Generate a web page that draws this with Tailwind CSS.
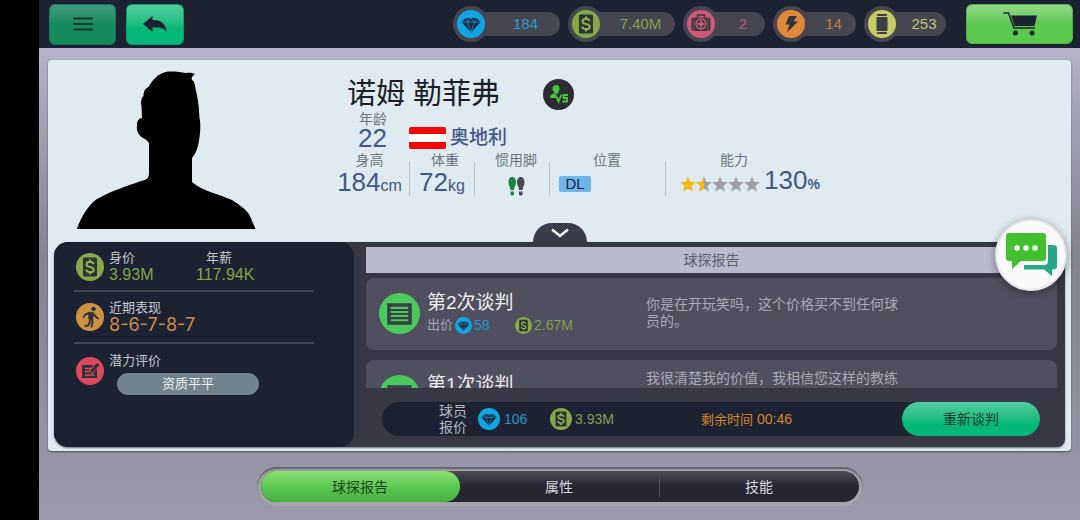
<!DOCTYPE html>
<html lang="zh-CN">
<head>
  <meta charset="UTF-8">
  <meta name="viewport" content="width=device-width, initial-scale=1.0">
  <title>诺姆 勒菲弗 - 球探报告</title>
  <script src="https://cdn.jsdelivr.net/npm/@tailwindcss/browser@4"></script>
  <style>
    body, button {
      font-family: 'Liberation Sans', 'Noto Sans CJK SC', sans-serif;
    }
  </style>
</head>
<body class="min-h-screen bg-black pl-[39px]">

  <!-- shared icons -->
  <svg class="hidden" aria-hidden="true">
    <symbol id="gem" viewBox="0 0 28 28">
      <circle cx="14" cy="14" r="14" fill="#12a5e3"/>
      <path d="M8.5 8h11l4 4L14 22.500 4.500 12z" fill="#1d2a3c"/>
      <path d="M4.500 12h19M8.500 8l2 4L14 22l3.500-10 2-4M10.500 12L14 8l3.500 4" fill="none" stroke="#12a5e3" stroke-width=".7"/>
    </symbol>
    <symbol id="cash" viewBox="0 0 28 28">
      <circle cx="14" cy="14" r="14" fill="#86a948"/>
      <rect x="7" y="4.500" width="14" height="19" rx="1.500" fill="#2b3338"/>
      <path d="M17.500 11.200c-.3-1.600-1.700-2.400-3.500-2.400-2 0-3.500 1-3.500 2.600 0 3.700 7.200 1.700 7.200 5.300 0 1.600-1.600 2.600-3.700 2.600-2 0-3.500-.9-3.800-2.600M14 6.500v2.500M14 19v2.500" fill="none" stroke="#8fb44c" stroke-width="2"/>
    </symbol>
    <symbol id="star" viewBox="0 0 16 16">
      <path d="M8 .5l2.200 5.200 5.600.5-4.300 3.700 1.300 5.500L8 12.500l-4.800 2.900 1.300-5.500L.2 6.200l5.600-.5z"/>
    </symbol>
    <symbol id="report" viewBox="0 0 40 40">
      <circle cx="20" cy="20" r="20" fill="#4bc95a"/>
      <rect x="8" y="10" width="24" height="21" fill="#3a4048"/>
      <path d="M11.500 14.500h17M11.500 18.500h17M11.500 22.500h17M11.500 26.500h17" stroke="#4bc95a" stroke-width="2"/>
    </symbol>
  </svg>

  <div class="flex min-h-screen flex-col bg-linear-to-b from-[#b4b1c9] from-10% via-[#83828f] via-50% to-[#9b9aab]">

    <header class="flex h-12 items-center bg-[#1d2232] pr-[7px] pl-[10px]">
      <button aria-label="菜单" class="flex h-[41px] w-[67px] items-center justify-center rounded-md border border-[#16795a] bg-linear-to-b from-[#3f9b80] to-[#148a5d] to-50%">
        <svg class="h-4 w-5" viewBox="0 0 20 16" stroke="#17352f" stroke-width="2" stroke-linecap="round"><path d="M1 2.500h18M1 8h18M1 13.500h18"/></svg>
      </button>
      <button aria-label="返回" class="ml-[10px] flex h-[41px] w-[58px] items-center justify-center rounded-md border border-[#0a9f6b] bg-linear-to-b from-[#4fcda1] to-[#05b879] to-60%">
        <svg class="h-[17px] w-6" viewBox="0 0 24 17" fill="#1d2232"><path d="M0 8L9.500 0v4C18 3.500 23 8 23.500 16c-2-4-6-5-14-4.500V16z"/></svg>
      </button>

      <div class="ml-auto flex gap-2 text-[15px]">
        <div class="flex w-[107px] items-center">
          <span class="z-10 flex size-9 shrink-0 items-center justify-center rounded-full bg-[#45464f]"><svg class="size-7"><use href="#gem"/></svg></span>
          <span class="-ml-2 h-6 grow rounded-r-full bg-[#45464f] pl-[10px] text-center leading-6 text-[#2c9bd0]">184</span>
        </div>
        <div class="flex w-[107px] items-center">
          <span class="z-10 flex size-9 shrink-0 items-center justify-center rounded-full bg-[#45464f]"><svg class="size-7"><use href="#cash"/></svg></span>
          <span class="-ml-2 h-6 grow rounded-r-full bg-[#45464f] pl-[10px] text-center leading-6 text-[#86a052]">7.40M</span>
        </div>
        <div class="flex w-[82px] items-center">
          <span class="z-10 flex size-9 shrink-0 items-center justify-center rounded-full bg-[#45464f]">
            <svg class="size-7" viewBox="0 0 28 28">
              <circle cx="14" cy="14" r="14" fill="#cf5a78"/>
              <path d="M10.500 7V5h7v2" fill="none" stroke="#3a3844" stroke-width="1.500"/>
              <rect x="4.500" y="7.500" width="19" height="13.500" rx="2" fill="#3a3844"/>
              <path d="M7 7.500v13.500M21 7.500v13.500" stroke="#cf5a78" stroke-width=".5"/>
              <circle cx="14" cy="14" r="5" fill="none" stroke="#cf5a78" stroke-width="1.300"/>
              <path d="M14 10.500v7M10.500 14h7" stroke="#cf5a78" stroke-width="2"/>
            </svg>
          </span>
          <span class="-ml-2 h-6 grow rounded-r-full bg-[#45464f] pl-[10px] text-center leading-6 text-[#b5597c]">2</span>
        </div>
        <div class="flex w-[83px] items-center">
          <span class="z-10 flex size-9 shrink-0 items-center justify-center rounded-full bg-[#45464f]">
            <svg class="size-7" viewBox="0 0 28 28">
              <circle cx="14" cy="14" r="14" fill="#e0883a"/>
              <path d="M12 6h8l-3.500 5.500H21L10 22.500l2.500-8H8.500z" fill="#33323c"/>
            </svg>
          </span>
          <span class="-ml-2 h-6 grow rounded-r-full bg-[#45464f] pl-[10px] text-center leading-6 text-[#c07a48]">14</span>
        </div>
        <div class="flex w-[82px] items-center">
          <span class="z-10 flex size-9 shrink-0 items-center justify-center rounded-full bg-[#45464f]">
            <svg class="size-7" viewBox="0 0 28 28">
              <circle cx="14" cy="14" r="14" fill="#c6cc62"/>
              <path d="M9.500 4.500h9v1h-9zM9 7.500h10v13H9zM9.500 22.500h9v1h-9z" fill="#3c3f45" stroke="#3c3f45" stroke-linejoin="round"/>
            </svg>
          </span>
          <span class="-ml-2 h-6 grow rounded-r-full bg-[#45464f] pl-[10px] text-center leading-6 text-[#bcc473]">253</span>
        </div>
      </div>

      <button aria-label="商店" class="ml-5 flex h-10 w-[107px] items-center justify-center rounded-md border border-[#4fb548] bg-linear-to-b from-[#92d988] to-[#5bc94e] to-50%">
        <svg class="h-6 w-[34px]" viewBox="0 0 34 24" fill="#1d2232">
          <path d="M8 3.500h26l-2.500 10.500H11.500z"/>
          <path d="M.5 1h5l5.500 15h21" fill="none" stroke="#1d2232" stroke-width="1.500"/>
          <circle cx="12.500" cy="21" r="2.500"/><circle cx="29" cy="21" r="2.500"/>
        </svg>
      </button>
    </header>

    <main class="relative mx-[9px] mt-3 rounded-[4px] bg-[#dfebf0] px-[6px] pb-1 shadow-[0_1px_2px_#4b4b58]">

      <!-- player profile -->
      <section class="relative flex gap-[78px] pt-[11px] pb-[13px] pl-[22px]">
        <svg class="h-[158px] w-[180px] shrink-0" viewBox="76 71 180 158" role="img" aria-label="球员头像">
          <path d="M77 229C80 219 88 205 97 199c14-8 30-13 44-18 6-1 8-3 8-8V143c-2-3-4-4-6-5-4-2-7-7-6-13 0-4 2-7 5-7l-.5-12c-1-5 0-8 2-10 0-4 1-7 5-9 4-7 9-13 17-15 7-1 14 0 20 1 3-.5 6-.5 9.500 1-2 2-4 3-3 6 3 2 3 6 4 11 2 8 3 16 3.500 27 1 4 1 9 .500 15-1 9-2 18-8 25v24c12 10 27 12 40 18 8 5 15 10 18 16 2 5 4 9 5.500 13z"/>
        </svg>

        <div class="min-w-0 grow pt-[5px] text-[#6c747e]">
          <div class="flex items-center gap-[43px] pl-[13px]">
            <h1 class="text-[29px] leading-9 text-[#1b1f2b]">诺姆 勒菲弗</h1>
            <svg class="size-[31px]" viewBox="0 0 31 31" role="img" aria-label="对比">
              <circle cx="15.500" cy="15.500" r="15.500" fill="#2c2c34"/>
              <circle cx="13" cy="9.500" r="3.500" fill="#46c63f"/>
              <path d="M7 19c0-3 2-4 4-4.500l1-2.500h3l.5 2.500-4 .5 1.500 4z" fill="#46c63f"/>
              <path d="M12.500 15.500l3 7 3-7M25 16h-4.500v3H24v3.500h-4.500" fill="none" stroke="#46c63f" stroke-width="1.800"/>
            </svg>
          </div>

          <div class="pl-[25px] text-sm leading-[14px]">年龄</div>
          <div class="mt-px flex h-[22px] items-center pl-[24px] text-[#41598a]">
            <span class="w-[51px] text-[26px] leading-[22px]">22</span>
            <span class="h-[22px] w-[37px] rounded-xs border-y-7 border-[#fb0303] bg-white"></span>
            <span class="ml-1 text-[19px] leading-[22px] font-medium">奥地利</span>
          </div>

          <div class="mt-1 flex items-end text-sm leading-[14px]">
            <div class="w-[75px] pr-[4px] text-center">
              <div>身高</div>
              <div class="mt-px h-7 leading-7 text-[#41598a]"><span class="text-[26px]">184</span><span class="text-base">cm</span></div>
            </div>
            <div class="h-[34px] w-px bg-[#b9c1ca]"></div>
            <div class="w-16 text-center">
              <div class="pl-[6px]">体重</div>
              <div class="mt-px h-7 leading-7 text-[#41598a]"><span class="text-[26px]">72</span><span class="text-base">kg</span></div>
            </div>
            <div class="h-[34px] w-px bg-[#b9c1ca]"></div>
            <div class="w-[74px] pl-[8px] text-center">
              <div>惯用脚</div>
              <div class="mt-px flex h-7 items-center justify-center">
                <svg class="mt-2 h-[19px] w-[17px]" viewBox="0 0 17 19" role="img" aria-label="右脚">
                  <path d="M4 0c3 0 4 2.500 4 5.500S6 9.500 6 13H2.500C2 9.500.5 8.500.5 5.500S1.500 0 4 0zM2.500 14.500H6V17c0 2-3.500 2-3.500 0z" fill="#1d8541"/>
                  <path d="M13 0c-3 0-4 2.500-4 5.500s2 4 2 7.500h3.500c.5-3.500 2-4.500 2-7.500S15.500 0 13 0zM14.500 14.500H11V17c0 2 3.500 2 3.500 0z" fill="#4a4a55"/>
                </svg>
              </div>
            </div>
            <div class="h-[34px] w-px bg-[#b9c1ca]"></div>
            <div class="w-[115px] pl-[9px]">
              <div class="pr-[10px] text-center">位置</div>
              <div class="mt-px flex h-7 items-center">
                <span class="mt-1 w-8 rounded-[2px] bg-[#70b4ec] text-center text-[15px] leading-4 text-[#16202f]">DL</span>
              </div>
            </div>
            <div class="h-[34px] w-px bg-[#b9c1ca]"></div>
            <div class="pl-[14px]">
              <div class="pl-10">能力</div>
              <div class="mt-px flex h-7 items-center text-[#41598a]">
                <span class="mr-1 flex pt-1 text-[#9da0a3]" role="img" aria-label="1.5 星">
                  <svg class="size-4 fill-[#f7b80d]"><use href="#star"/></svg>
                  <span class="relative">
                    <svg class="size-4 fill-current"><use href="#star"/></svg>
                    <span class="absolute inset-y-0 left-0 w-1/2 overflow-hidden"><svg class="size-4 fill-[#f7b80d]"><use href="#star"/></svg></span>
                  </span>
                  <svg class="size-4 fill-current"><use href="#star"/></svg>
                  <svg class="size-4 fill-current"><use href="#star"/></svg>
                  <svg class="size-4 fill-current"><use href="#star"/></svg>
                </span>
                <span class="leading-7"><span class="text-[26px]">130</span><b class="text-sm">%</b></span>
              </div>
            </div>
          </div>
        </div>

        <button aria-label="展开" class="absolute bottom-0 left-1/2 flex h-[19px] w-[54px] -translate-x-1/2 items-center justify-center rounded-t-full bg-[#3b3c49]">
          <svg class="h-[10px] w-[18px]" viewBox="0 0 18 10" fill="none" stroke="#fff" stroke-width="2.500"><path d="M1 1.500l8 6.500 8-6.500"/></svg>
        </button>
      </section>

      <div class="flex overflow-hidden rounded-[14px] rounded-tr-none rounded-br-lg bg-[#373745] shadow-[0_1px_2px_#6a7280]">

        <!-- value, form, potential -->
        <aside class="w-[300px] shrink-0 rounded-[14px] bg-[#1d2232] pt-2 pr-10 pb-12 pl-5 text-[13px] leading-4 text-[#c3c7cd]">
          <div class="flex items-center gap-[5px] border-b-2 border-[#434754] pb-[7px] pl-[2px]">
            <svg class="size-7"><use href="#cash"/></svg>
            <dl class="w-[82px]"><dt>身价</dt><dd class="text-base leading-[17px] text-[#7fa544]">3.93M</dd></dl>
            <dl><dt class="pl-[10px]">年薪</dt><dd class="text-base leading-[17px] text-[#7fa544]">117.94K</dd></dl>
          </div>
          <div class="flex items-center gap-[5px] border-b-2 border-[#434754] pt-2 pb-[9px] pl-[2px]">
            <svg class="size-7" viewBox="0 0 28 28">
              <circle cx="14" cy="14" r="14" fill="#cd9440"/>
              <g fill="#33323c" stroke="#33323c" stroke-linecap="round" stroke-linejoin="round">
                <circle cx="17.500" cy="6" r="1.800"/><circle cx="10" cy="23" r="1"/>
                <path d="M13 9.500l4 .5-.5 6-3.500-.5z" stroke-width="1.500"/>
                <path d="M13 10l-3.500 1.500L7.500 14M17 10.500l2.500 3 2.500 2M14 16l-.5 4-1.500 2.500M16 16l.5 3-1 4.500" fill="none" stroke-width="2"/>
              </g>
            </svg>
            <dl><dt>近期表现</dt><dd class="font-['Inter'] text-lg leading-[17px] text-[#c98f47]">8-6-7-8-7</dd></dl>
          </div>
          <div class="flex gap-[5px] pt-[9px] pl-[2px]">
            <svg class="mt-1 size-7" viewBox="0 0 28 28">
              <circle cx="14" cy="14" r="14" fill="#dc4a5d"/>
              <path d="M6 8h15v13H6z" fill="#33323c"/>
              <path d="M9 11.500h6M9 14.500h4M9 18h9" stroke="#dc4a5d" stroke-width="1.500"/>
              <path d="M14.500 15.500L22 6.500" stroke="#dc4a5d" stroke-width="5"/>
              <path d="M14 16l1-3.500 6-6.500 2.500 2-6 6.500z" fill="#33323c"/>
            </svg>
            <div class="grow">
              <div>潜力评价</div>
              <div class="mt-1 ml-2 w-[142px] rounded-full bg-[#70838e] text-center leading-[22px] text-[#eef2f4]">资质平平</div>
            </div>
          </div>
        </aside>

        <!-- scout report -->
        <section class="flex min-w-0 grow flex-col pt-[5px] pr-2 pl-3">
          <h2 class="bg-[#b9bacc] text-center text-sm leading-[26px] text-[#5f606e]">球探报告</h2>

          <ul class="mt-[5px] flex h-[110px] flex-col gap-[10px] overflow-hidden">
            <li class="flex h-[72px] shrink-0 rounded-lg bg-[#504f5f] pl-[13px]">
              <svg class="mt-[15px] size-[41px] shrink-0"><use href="#report"/></svg>
              <div class="ml-[7px] w-[219px] shrink-0 pt-[13px]">
                <h3 class="text-[19px] leading-[23px] text-[#eeeef2]">第2次谈判</h3>
                <div class="flex items-center text-sm leading-[22px]">
                  <span class="mr-[2px] text-[13px] text-[#a9a9b5]">出价</span>
                  <svg class="mr-[2px] size-[17px]"><use href="#gem"/></svg>
                  <span class="w-[41px] text-[#2b93ca]">58</span>
                  <svg class="mr-[2px] size-[17px]"><use href="#cash"/></svg>
                  <span class="text-[#82a14f]">2.67M</span>
                </div>
              </div>
              <p class="w-[262px] pt-[18px] text-sm leading-[17px] text-[#a9a9b5]">你是在开玩笑吗，这个价格买不到任何球员的。</p>
            </li>
            <li class="flex h-[72px] shrink-0 rounded-lg bg-[#504f5f] pl-[13px]">
              <svg class="mt-[15px] size-[41px] shrink-0"><use href="#report"/></svg>
              <div class="ml-[7px] w-[219px] shrink-0 pt-[13px]">
                <h3 class="text-[19px] leading-[23px] text-[#eeeef2]">第1次谈判</h3>
              </div>
              <p class="w-[262px] pt-[10px] text-sm leading-[17px] text-[#a9a9b5]">我很清楚我的价值，我相信您这样的教练</p>
            </li>
          </ul>

          <div class="mt-[14px] mr-[17px] mb-[11px] ml-4 flex h-[34px] items-center rounded-full bg-[#1d2232] pl-[57px] text-sm">
            <span class="w-7 leading-4 text-[#b5b8c0]">球员报价</span>
            <svg class="ml-[11px] size-[22px]"><use href="#gem"/></svg>
            <span class="ml-1 w-[46px] text-[#2b93ca]">106</span>
            <svg class="size-[22px]"><use href="#cash"/></svg>
            <span class="ml-[3px] text-[#82a14f]">3.93M</span>
            <span class="mr-[110px] ml-auto text-[#cf8a2c]"><span class="text-[13px]">剩余时间</span> 00:46</span>
            <button class="h-full w-[138px] rounded-full bg-linear-to-b from-[#4fcda1] to-[#05b879] to-60% text-[#133d35]">重新谈判</button>
          </div>
        </section>
      </div>

      <button aria-label="聊天" class="absolute top-[159px] right-1 flex size-[72px] items-center justify-center rounded-full border-2 border-[#e4e4ea] bg-[#fafafb] shadow-[0_2px_8px_#00000066]">
        <svg class="h-[44px] w-[51px]" viewBox="0 0 51 44">
          <path d="M42 12h5c2 0 4 1 4 3v18c0 2-1 3.500-4 3.500h-1V43l-8-6.500H18V32h20c3 0 4-1.500 4-4z" fill="#27a783"/>
          <path d="M3 0h34c2 0 3 1 3 3v22c0 2-1 3-3 3H15l-9 8v-8H3c-2 0-3-1-3-3V3c0-2 1-3 3-3z" fill="#43c02f"/>
          <circle cx="11" cy="15" r="2.700" fill="#fff"/><circle cx="20" cy="15" r="2.700" fill="#fff"/><circle cx="29" cy="15" r="2.700" fill="#fff"/>
        </svg>
      </button>
    </main>

    <nav class="mx-auto mt-4 mb-3 flex w-full max-w-[606px] rounded-full bg-[#a5a4ad] px-1 py-[4px] text-sm shadow-[inset_0_2px_2px_#5f5e68]">
      <div class="flex h-[31px] grow items-center rounded-full bg-linear-to-b from-[#4d4d57] to-[#252631] to-50%">
        <button class="h-full w-1/3 rounded-full bg-linear-to-b from-[#8ade74] via-[#5cc951] to-[#48ad41] text-[#1d4421]">球探报告</button>
        <button class="h-full w-1/3 text-[#d9dade]">属性</button>
        <span class="h-5 w-px bg-[#4c4d58]"></span>
        <button class="h-full w-1/3 text-[#d9dade]">技能</button>
      </div>
    </nav>
  </div>
</body>
</html>
